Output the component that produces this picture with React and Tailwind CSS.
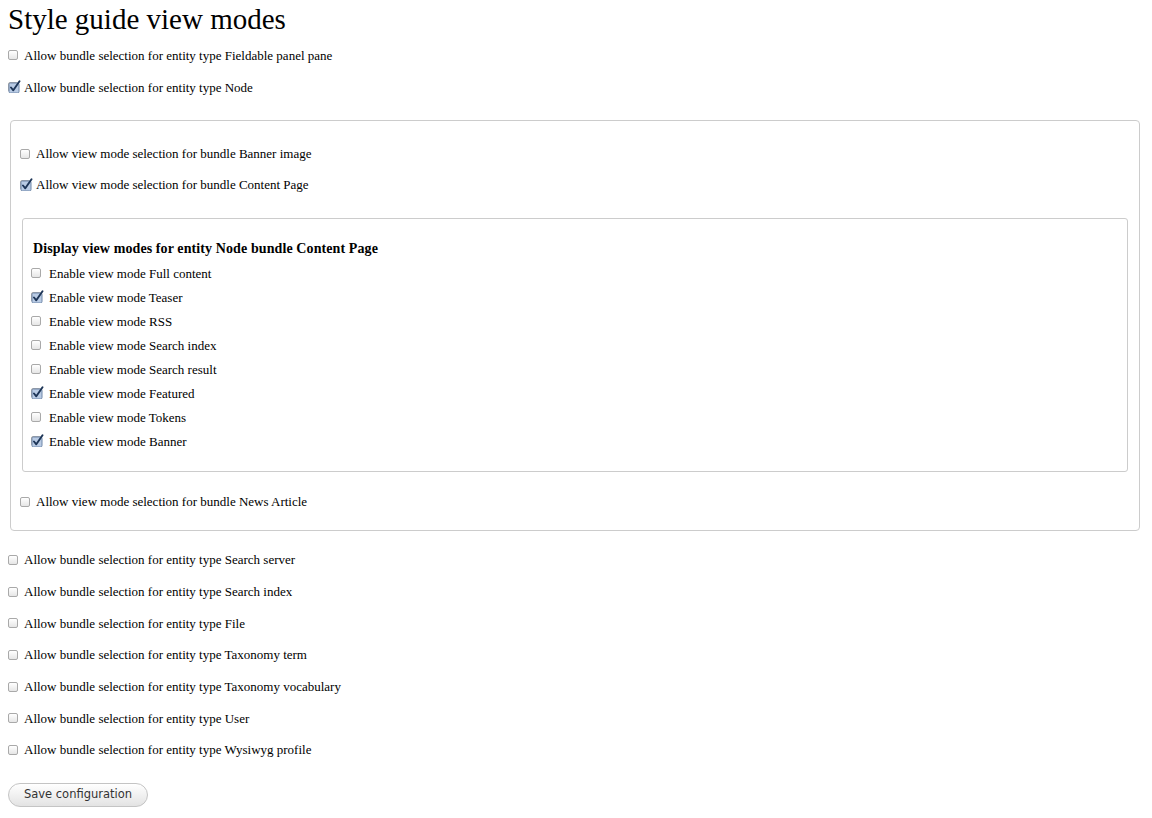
import React from "react";

function Box({ checked }) {
  return (
    <span className="relative inline-block w-[10px] h-[10px] shrink-0 rounded-[2px] border border-[#a9a9a9] bg-gradient-to-b from-[#ffffff] to-[#e6e6e6]">
      {checked && (
        <svg className="absolute left-[-1px] top-[-3px]" width="13" height="13" viewBox="0 0 13 13">
          <rect x="1" y="3" width="10" height="10" rx="1.5" fill="#b9cbe4" stroke="#6f86a8" strokeWidth="1" />
          <path d="M3 7.5 L5.3 10.3 L11.5 1.2" fill="none" stroke="#1d3557" strokeWidth="1.9" strokeLinecap="round" strokeLinejoin="round" />
        </svg>
      )}
    </span>
  );
}

function Row({ checked, label, h, gap = "gap-[6px]" }) {
  return (
    <div className={`flex items-center ${gap} ${h}`}>
      <Box checked={checked} />
      <span className="text-[13px] text-black leading-none">{label}</span>
    </div>
  );
}

const modes = [
  ["Full content", false],
  ["Teaser", true],
  ["RSS", false],
  ["Search index", false],
  ["Search result", false],
  ["Featured", true],
  ["Tokens", false],
  ["Banner", true],
];

const bottom = [
  "Search server",
  "Search index",
  "File",
  "Taxonomy term",
  "Taxonomy vocabulary",
  "User",
  "Wysiwyg profile",
];

export default function App() {
  return (
    <div className="w-[1152px] h-[818px] bg-white px-[8px] font-['Liberation_Serif',serif] text-black">
      <h1 className="h-[39px] pt-[4px] text-[29px] leading-[30px]">Style guide view modes</h1>
      <Row h="h-[32px]" label="Allow bundle selection for entity type Fieldable panel pane" />
      <Row h="h-[32px]" checked label="Allow bundle selection for entity type Node" />
      <div className="mt-[17px] ml-[2px] w-[1130px] rounded-[4px] border border-[#cccccc] pl-[9px] pr-[11px] pt-[17px] pb-[13px]">
        <div>
          <Row h="h-[31px]" label="Allow view mode selection for bundle Banner image" />
          <Row h="h-[31px]" checked label="Allow view mode selection for bundle Content Page" />
        </div>
        <div className="mt-[18px] ml-[2px] rounded-[3px] border border-[#cccccc] pl-[8px] pt-[18px] pb-[18px]">
          <div className="h-[24px] flex items-center pl-[2px] text-[14px] tracking-[0.1px] font-bold leading-none">
            Display view modes for entity Node bundle Content Page
          </div>
          {modes.map(([m, c]) => (
            <Row key={m} h="h-[24px]" gap="gap-[8px]" checked={c} label={`Enable view mode ${m}`} />
          ))}
        </div>
        <div className="mt-[14px]">
          <Row h="h-[31px]" label="Allow view mode selection for bundle News Article" />
        </div>
      </div>
      <div className="mt-[13px]">
        {bottom.map((b) => (
          <Row key={b} h="h-[31.7px]" label={`Allow bundle selection for entity type ${b}`} />
        ))}
      </div>
      <button className="mt-[17px] h-[24px] w-[140px] rounded-full border border-[#c4c4c4] bg-gradient-to-b from-[#ffffff] to-[#e3e3e3] font-['DejaVu_Sans',sans-serif] text-[11.5px] text-[#333]">
        Save configuration
      </button>
    </div>
  );
}
